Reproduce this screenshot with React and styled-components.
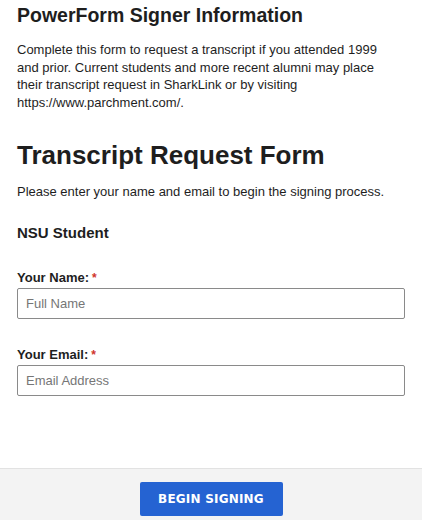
import React from "react";
import styled, { createGlobalStyle } from "styled-components";

const GlobalStyle = createGlobalStyle`
  html, body {
    margin: 0;
    padding: 0;
    background: #fff;
  }
  body {
    font-family: "Liberation Sans", Arial, sans-serif;
    color: #1e1e1e;
  }
  * {
    box-sizing: border-box;
  }
`;

const Page = styled.div`
  display: flex;
  flex-direction: column;
  min-height: 520px;
  width: 422px;
`;

const Content = styled.div`
  flex: 1;
  padding: 3px 17px 0 17px;
`;

const InfoTitle = styled.h2`
  margin: 0;
  font-size: 19.5px;
  font-weight: bold;
  line-height: 24px;
`;

const Text = styled.p`
  margin: ${(p) => p.$margin || "0"};
  max-width: ${(p) => p.$max || "none"};
  font-size: 13px;
  line-height: 17.5px;
`;

const FormTitle = styled.h1`
  margin: 29px 0 0 0;
  font-size: 26px;
  font-weight: bold;
  line-height: 30px;
`;

const SectionTitle = styled.h3`
  margin: 23px 0 0 0;
  font-size: 15px;
  font-weight: bold;
  line-height: 18px;
`;

const Field = styled.div`
  display: flex;
  flex-direction: column;
  margin-top: ${(p) => p.$top || "21px"};
`;

const Label = styled.label`
  font-size: 13px;
  font-weight: bold;
  line-height: 16px;
  margin-bottom: 2px;
`;

const Required = styled.span`
  color: #d0342c;
  margin-left: 3px;
  font-size: 12px;
`;

const Input = styled.input`
  width: 388px;
  height: 31px;
  border: 1px solid #8a8a8a;
  border-radius: 2px;
  padding: 0 8px;
  font-family: "Liberation Sans", Arial, sans-serif;
  font-size: 13px;
  color: #1e1e1e;
  &::placeholder {
    color: #767676;
  }
  &:focus {
    outline: none;
  }
`;

const Footer = styled.div`
  display: flex;
  justify-content: center;
  align-items: flex-start;
  height: 52px;
  padding-top: 13px;
  background: #f3f3f3;
  border-top: 1px solid #e2e2e2;
`;

const Button = styled.button`
  width: 143px;
  height: 34px;
  border: none;
  border-radius: 2px;
  background: #2563d2;
  color: #fff;
  font-family: "DejaVu Sans", Verdana, sans-serif;
  font-weight: bold;
  font-size: 12px;
  letter-spacing: 0.2px;
`;

export default function App() {
  return (
    <>
      <GlobalStyle />
      <Page>
        <Content>
          <InfoTitle>PowerForm Signer Information</InfoTitle>
          <Text $margin="14px 0 0 0" $max="376px">
            Complete this form to request a transcript if you attended 1999
            and prior. Current students and more recent alumni may place
            their transcript request in SharkLink or by visiting
            https://www.parchment.com/.
          </Text>
          <FormTitle>Transcript Request Form</FormTitle>
          <Text $margin="13px 0 0 0">
            Please enter your name and email to begin the signing process.
          </Text>
          <SectionTitle>NSU Student</SectionTitle>
          <Field $top="28px">
            <Label htmlFor="name">
              Your Name:<Required>*</Required>
            </Label>
            <Input id="name" type="text" placeholder="Full Name" />
          </Field>
          <Field $top="28px">
            <Label htmlFor="email">
              Your Email:<Required>*</Required>
            </Label>
            <Input id="email" type="email" placeholder="Email Address" />
          </Field>
        </Content>
        <Footer>
          <Button>BEGIN SIGNING</Button>
        </Footer>
      </Page>
    </>
  );
}
